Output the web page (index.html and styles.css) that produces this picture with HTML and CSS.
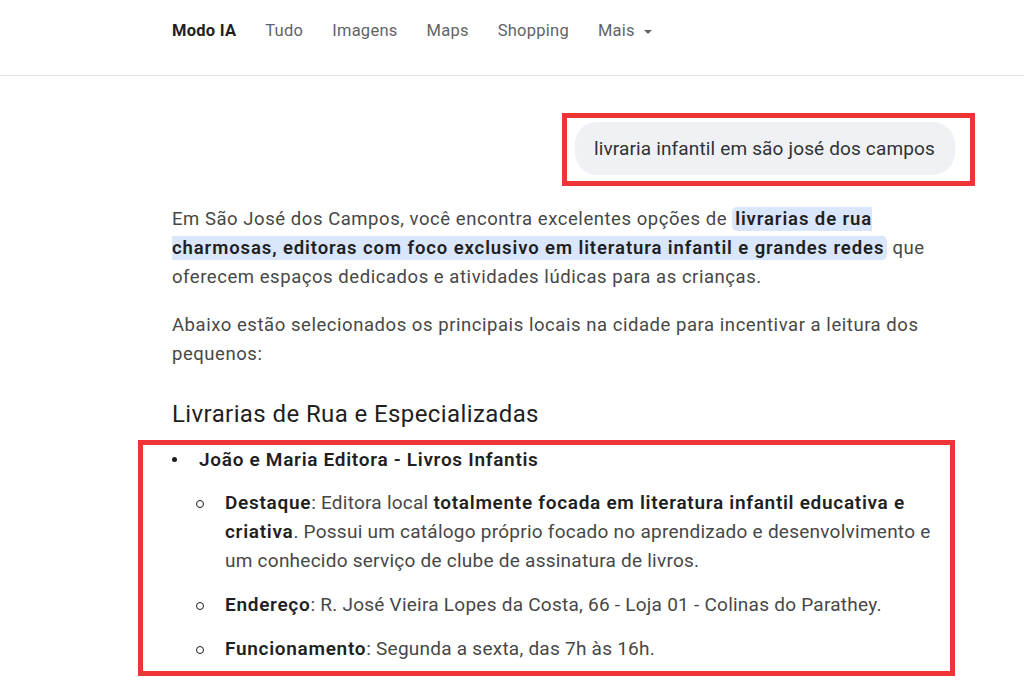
FILE: index.html
```html
<!DOCTYPE html>
<html lang="pt-BR">
<head>
<meta charset="utf-8">
<title>Modo IA</title>
<link rel="stylesheet" href="styles.css">
</head>
<body>
<header class="nav">
  <a class="tab active">Modo IA</a>
  <a class="tab">Tudo</a>
  <a class="tab">Imagens</a>
  <a class="tab">Maps</a>
  <a class="tab">Shopping</a>
  <a class="tab more">Mais <span class="caret"></span></a>
</header>
<main class="main">
  <div class="query-row">
    <div class="mark mark-query">
      <div class="pill">livraria infantil em são josé dos campos</div>
    </div>
  </div>
  <p class="para">Em São José dos Campos, você encontra excelentes opções de <mark class="hl">livrarias de rua charmosas, editoras com foco exclusivo em literatura infantil e grandes redes</mark> que oferecem espaços dedicados e atividades lúdicas para as crianças.</p>
  <p class="para">Abaixo estão selecionados os principais locais na cidade para incentivar a leitura dos pequenos:</p>
  <h2 class="heading">Livrarias de Rua e Especializadas</h2>
  <div class="mark mark-list">
    <ul class="list">
      <li class="item">
        <div class="item-body">
          <b class="strong">João e Maria Editora - Livros Infantis</b>
          <ul class="sublist">
            <li class="subitem"><div class="sub-body"><b class="strong">Destaque</b>: Editora local <b class="strong">totalmente focada em literatura infantil educativa e criativa</b>. Possui um catálogo próprio focado no aprendizado e desenvolvimento e um conhecido serviço de clube de assinatura de livros.</div></li>
            <li class="subitem"><div class="sub-body"><b class="strong">Endereço</b>: R. José Vieira Lopes da Costa, 66 - Loja 01 - Colinas do Parathey.</div></li>
            <li class="subitem"><div class="sub-body"><b class="strong">Funcionamento</b>: Segunda a sexta, das 7h às 16h.</div></li>
          </ul>
        </div>
      </li>
    </ul>
  </div>
</main>
</body>
</html>
```
FILE: styles.css
```css
* { box-sizing: border-box; }
html, body { margin: 0; padding: 0; background: #ffffff; }
body {
  font-family: Roboto, "Liberation Sans", Arial, sans-serif;
  color: #474747;
  width: 1024px;
  height: 683px;
  overflow: hidden;
}
.nav {
  height: 76px;
  border-bottom: 1px solid #e3e3e3;
  display: flex;
  align-items: flex-start;
  padding: 21px 0 0 172px;
  gap: 29px;
  font-size: 16.5px;
  letter-spacing: 0.25px;
  line-height: 20px;
}
.tab { color: #5f6368; text-decoration: none; }
.tab.active { color: #1f1f1f; font-weight: 700; }
.more { display: flex; align-items: center; gap: 9px; }
.caret {
  width: 0; height: 0;
  border-left: 4px solid transparent;
  border-right: 4px solid transparent;
  border-top: 4px solid #5f6368;
  margin-top: 1px;
}
.main {
  padding: 37px 0 0 172px;
  width: 975px;
}
.query-row { display: flex; justify-content: flex-end; }
.mark { border: 5px solid #ee3434; }
.mark-query { padding: 4px 15px 6px 8px; }
.pill {
  background: #eff1f5;
  border-radius: 22px;
  height: 53px;
  padding: 0 20px 0 19px;
  display: flex;
  align-items: center;
  font-size: 19px;
  letter-spacing: 0.15px;
  color: #303134;
}
.para {
  margin: 19px 0 0 0;
  max-width: 766px;
  font-size: 18.5px;
  letter-spacing: 0.55px;
  line-height: 29px;
}
.para + .para { margin-top: 19px; }
.hl {
  background: #d9e6fb;
  color: #1f1f1f;
  font-weight: 600;
  letter-spacing: 0.9px;
  border-radius: 5px;
  padding: 1px 3px;
}
.heading {
  margin: 30px 0 0 0;
  font-size: 24px;
  letter-spacing: 0.4px;
  line-height: 30px;
  font-weight: 400;
  color: #1f1f1f;
}
.mark-list {
  margin: 11px 0 0 -34px;
  width: 817px;
  padding: 0 0 8px 0;
}
.list, .sublist { list-style: none; margin: 0; padding: 0; }
.item {
  display: grid;
  grid-template-columns: 56px 1fr;
}
.item::before {
  content: "";
  width: 5px; height: 5px;
  border-radius: 50%;
  background: #1f1f1f;
  margin: 12px 0 0 29px;
}
.strong { color: #1f1f1f; font-weight: 600; }
.item-body { font-size: 19px; letter-spacing: 0.25px; line-height: 29px; }
.item-body .strong { letter-spacing: 0.7px; }
.sublist { margin-top: 14px; }
.subitem {
  display: grid;
  grid-template-columns: 26px 1fr;
  margin-top: 15px;
}
.subitem:first-child { margin-top: 0; }
.subitem::before {
  content: "";
  width: 6px; height: 6px;
  border-radius: 50%;
  border: 1.3px solid #1f1f1f;
  margin: 12px 0 0 -3px;
}
.sub-body { max-width: 716px; }
```
